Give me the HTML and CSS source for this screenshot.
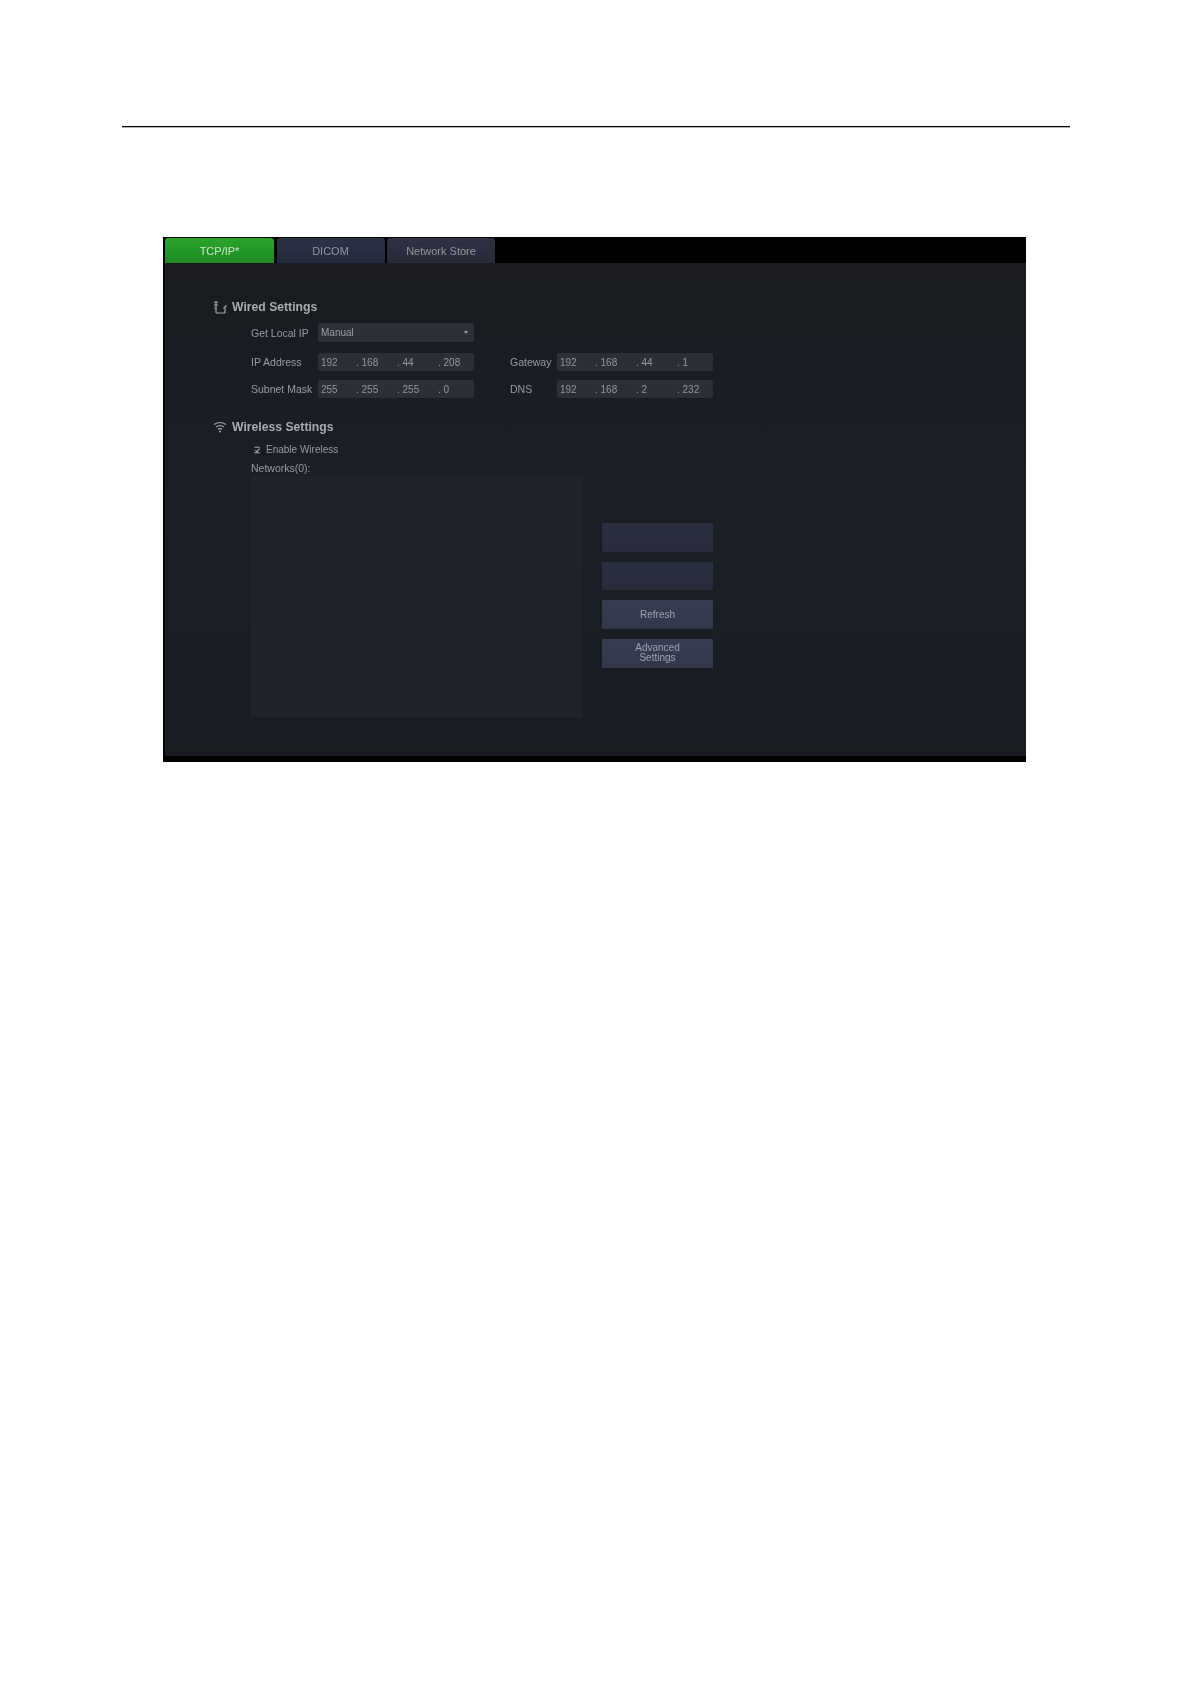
FILE: index.html
```html
<!DOCTYPE html>
<html lang="en">
<head>
<meta charset="utf-8">
<title>Network settings</title>
<link rel="stylesheet" href="styles.css">
</head>
<body>
<div class="page">
  <hr class="rule">
  <div class="shot">
    <div class="tabs">
      <div class="tab tab-on"><span class="soft">TCP/IP*</span></div>
      <div class="tab tab-a"><span class="soft">DICOM</span></div>
      <div class="tab tab-b"><span class="soft">Network Store</span></div>
    </div>
    <div class="panel">
      <h2 class="heading heading-wired">
        <svg class="hicon" viewBox="0 0 14 14" aria-hidden="true"><path d="M1 2h4M3 2v3M1 5h4M3 5v2M1 8h3M3 8v5M3 13h9M12 13V6M12 8h-2M12 6h2" fill="none" stroke="#a3a6ab" stroke-width="1.2"/></svg>
        <span class="soft">Wired Settings</span>
      </h2>
      <div class="form">
        <div class="row row-select">
          <span class="label soft">Get Local IP</span>
          <div class="field select"><span class="soft">Manual</span><span class="caret"></span></div>
        </div>
        <div class="row row-ip">
          <span class="label soft">IP Address</span>
          <div class="field ip soft"><span>192</span><span>.&nbsp;168</span><span>.&nbsp;44</span><span>.&nbsp;208</span></div>
          <span class="label label-2 soft">Gateway</span>
          <div class="field ip soft"><span>192</span><span>.&nbsp;168</span><span>.&nbsp;44</span><span>.&nbsp;1</span></div>
        </div>
        <div class="row row-mask">
          <span class="label soft">Subnet Mask</span>
          <div class="field ip soft"><span>255</span><span>.&nbsp;255</span><span>.&nbsp;255</span><span>.&nbsp;0</span></div>
          <span class="label label-2 soft">DNS</span>
          <div class="field ip soft"><span>192</span><span>.&nbsp;168</span><span>.&nbsp;2</span><span>.&nbsp;232</span></div>
        </div>
      </div>
      <h2 class="heading heading-wireless">
        <svg class="hicon" viewBox="0 0 14 14" aria-hidden="true"><path d="M1 4.5Q7 0.5 13 4.5M3 7Q7 4.2 11 7M5 9.2Q7 8 9 9.2" fill="none" stroke="#a3a6ab" stroke-width="1.1"/><circle cx="7" cy="11.5" r="1" fill="#a3a6ab"/></svg>
        <span class="soft">Wireless Settings</span>
      </h2>
      <div class="form">
        <div class="check">
          <svg class="box" viewBox="0 0 8 10" aria-hidden="true"><path d="M1 3h5M1 8h5M2 5.5l1.5 1.5L6 4" fill="none" stroke="#a3a6ab" stroke-width="1"/></svg>
          <span class="label check-label soft">Enable Wireless</span>
        </div>
        <div class="net-label label soft">Networks(0):</div>
        <div class="net">
          <div class="list"></div>
          <div class="actions">
            <div class="btn btn-off"></div>
            <div class="btn btn-off"></div>
            <div class="btn"><span class="soft">Refresh</span></div>
            <div class="btn"><span class="soft">Advanced<br>Settings</span></div>
          </div>
        </div>
      </div>
    </div>
  </div>
</div>
</body>
</html>
```
FILE: styles.css
```css
html, body {
  margin: 0;
  padding: 0;
  background: #fff;
}
.page {
  height: 1684px;
  padding: 126px 121px 0 122px;
  box-sizing: border-box;
  overflow: hidden;
  font-family: "Liberation Sans", Arial, sans-serif;
}
.rule {
  margin: 0;
  border: 0;
  height: 1px;
  background: #000;
  box-shadow: 0 1px 0 rgba(0, 0, 0, 0.3);
}
.shot {
  width: 863px;
  height: 525px;
  margin: 110px 0 0 41px;
  background: #000;
  display: flex;
  flex-direction: column;
  padding: 0 0 6px 2px;
  box-sizing: border-box;
}
.soft {
  filter: blur(0.45px);
}
.tabs {
  display: flex;
  gap: 2.5px;
  height: 26px;
  padding-top: 1px;
  box-sizing: border-box;
  flex: none;
}
.tab {
  width: 108px;
  height: 25px;
  border-radius: 3px 3px 0 0;
  display: flex;
  align-items: center;
  justify-content: center;
  font-size: 11px;
  color: #9598a1;
}
.tab-on {
  width: 109px;
  background: linear-gradient(#2ba42c, #1c8a20);
  color: #c9e6c9;
}
.tab-a {
  background: linear-gradient(#2a3244, #242a3a);
}
.tab-b {
  background: linear-gradient(#2f3241, #262a39);
}
.panel {
  flex: 1;
  background: linear-gradient(#191b20, #1b1e26 50%, #1a1c22);
  padding: 36px 0 0 48px;
  box-sizing: border-box;
}
.heading {
  margin: 0;
  height: 16px;
  display: flex;
  align-items: center;
  gap: 5px;
  font-size: 12.2px;
  font-weight: bold;
  color: #a8abb0;
}
.hicon {
  width: 14px;
  height: 14px;
  flex: none;
  filter: blur(0.4px);
}
.heading-wireless {
  margin-top: 21px;
}
.form {
  padding-left: 38px;
}
.row {
  display: flex;
  align-items: center;
  height: 18px;
  margin-top: 9px;
}
.row-select {
  height: 19px;
  margin-top: 8px;
}
.row-ip {
  margin-top: 11px;
}
.label {
  font-size: 10.5px;
  color: #999ca2;
  width: 67px;
  flex: none;
  white-space: nowrap;
}
.label-2 {
  width: 47px;
  margin-left: 36px;
}
.field {
  width: 156px;
  height: 100%;
  flex: none;
  background: #2c2f37;
  border-radius: 2px;
  font-size: 10px;
  color: #94979e;
  box-sizing: border-box;
  padding-left: 3px;
}
.select {
  display: flex;
  align-items: center;
  justify-content: space-between;
  padding-right: 6px;
  background: #2d3038;
  color: #9a9da3;
}
.caret {
  width: 0;
  height: 0;
  border-left: 2.5px solid transparent;
  border-right: 2.5px solid transparent;
  border-top: 3px solid #9a9da3;
}
.ip {
  display: grid;
  grid-template-columns: 35px 41px 41px 1fr;
  align-items: center;
  white-space: nowrap;
}
.check {
  display: flex;
  align-items: center;
  gap: 4px;
  height: 12px;
  margin: 8px 0 0 2px;
}
.check-label {
  font-size: 10px;
}
.box {
  width: 9px;
  height: 11px;
  flex: none;
  filter: blur(0.3px);
}
.net-label {
  height: 12px;
  line-height: 12px;
  margin-top: 7px;
}
.net {
  display: flex;
  margin-top: 2px;
  height: 241px;
}
.list {
  width: 331px;
  background: #20222b;
  box-shadow: inset 0 0 2px #262933;
  flex: none;
}
.actions {
  margin: 47px 0 0 20px;
  width: 111px;
  display: flex;
  flex-direction: column;
  gap: 10px;
}
.btn {
  height: 28.7px;
  background: linear-gradient(#383c50, #33374a);
  border-radius: 1px;
  display: flex;
  align-items: center;
  justify-content: center;
  text-align: center;
  font-size: 10px;
  line-height: 10px;
  color: #a0a2ab;
}
.btn-off {
  background: linear-gradient(#2a2f3f, #282b3a);
}
```
